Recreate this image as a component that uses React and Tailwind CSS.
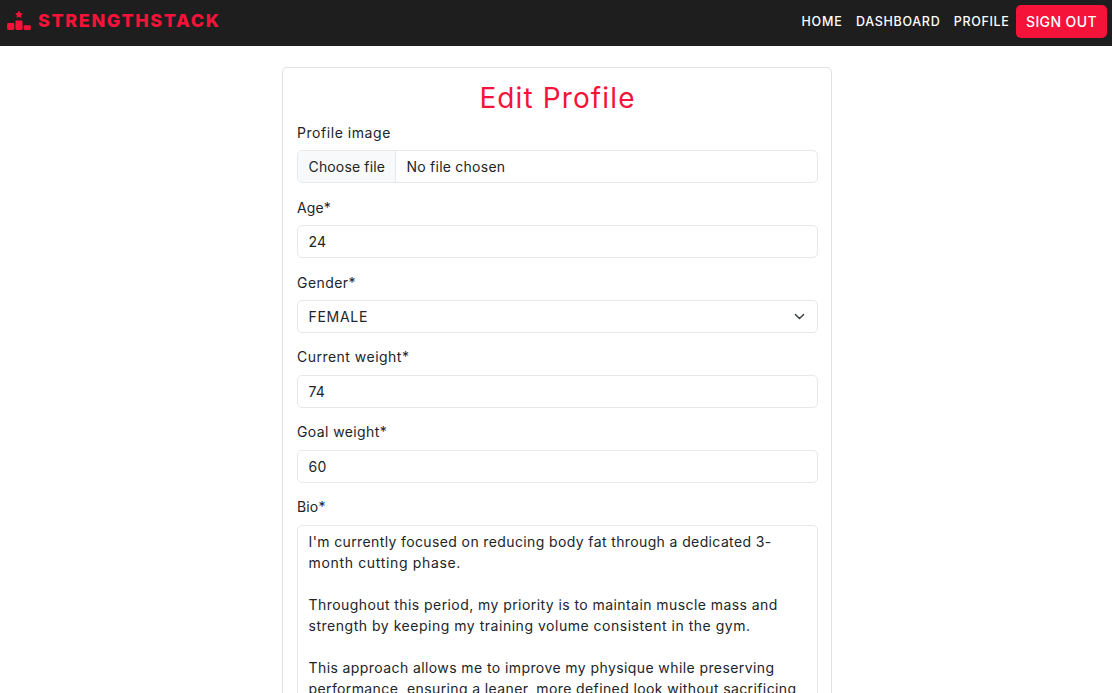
import React from "react";
import { FaRankingStar } from "react-icons/fa6";

const bio = [
  ["I'm currently focused on reducing body fat through a dedicated 3-", "tracking-[0.38px]"],
  ["month cutting phase.", "tracking-[0.66px]"],
  ["", ""],
  ["Throughout this period, my priority is to maintain muscle mass and", "tracking-[0.43px]"],
  ["strength by keeping my training volume consistent in the gym.", "tracking-[0.52px]"],
  ["", ""],
  ["This approach allows me to improve my physique while preserving", "tracking-[0.41px]"],
  ["performance, ensuring a leaner, more defined look without sacrificing", "tracking-[0.39px]"],
  ["strength.", "tracking-[0.45px]"],
];

function Field({ label, className, children }) {
  return (
    <div className="flex h-[75px] flex-col">
      <label className={`block h-[28px] leading-[21px] ${className}`}>{label}</label>
      {children}
    </div>
  );
}

const control =
  "block h-[33px] w-full rounded-[5px] border border-[#e6e8eb] bg-white px-[10.5px] leading-[21px] text-[#212529] outline-none";

function NavLink({ className, children }) {
  return (
    <a href="#" className={`pt-0.5 text-[12.5px] font-medium text-white ${className}`}>
      {children}
    </a>
  );
}

function Header() {
  return (
    <header className="flex h-[46px] items-start justify-between bg-[#1e1e1e] pr-[5.5px] pl-[7px]">
      <a href="#" className="flex h-[41px] items-center gap-[7px] text-[#f51339]">
        <FaRankingStar className="h-[19px] w-6" />
        <span className="text-[18px] font-extrabold tracking-[1.62px]">STRENGTHSTACK</span>
      </a>
      <nav className="flex items-center pt-[5px]">
        <NavLink className="mr-[13.5px] tracking-[0.8px]">HOME</NavLink>
        <NavLink className="mr-[13.5px] tracking-[0.7px]">DASHBOARD</NavLink>
        <NavLink className="mr-[6px] tracking-[0.65px]">PROFILE</NavLink>
        <button className="h-[33px] w-[91px] rounded-[5px] bg-[#f51339] pl-px text-[14px] font-medium tracking-[0.4px] whitespace-nowrap text-white">
          SIGN OUT
        </button>
      </nav>
    </header>
  );
}

export default function App() {
  return (
    <div className="h-[693px] overflow-hidden bg-white font-['Inter','Liberation_Sans',sans-serif] text-[14px] text-[#212529]">
      <Header />
      <main className="mt-[21px] ml-[282px] w-[550px] rounded-[5px] border border-[#dee0e2] pt-[13px] pr-[13px] pb-4 pl-[14px]">
        <h1 className="mb-[7px] h-[34px] text-center text-[28px] leading-[34px] tracking-[1.12px] text-[#f51339]">
          Edit Profile
        </h1>
        <form>
          <Field label="Profile image" className="tracking-[0.55px]">
            <div className="flex h-[33px] overflow-hidden rounded-[5px] border border-[#e6e8eb] leading-[31px]">
              <button type="button" className="w-[98px] border-r border-[#e6e8eb] bg-[#f8f9fa] pl-[10.5px] text-left tracking-[0.15px]">
                Choose file
              </button>
              <span className="pl-[10.5px] tracking-[0.24px]">No file chosen</span>
            </div>
          </Field>
          <Field label="Age*" className="tracking-[0.1px]">
            <input className={`${control} tracking-[0.2px]`} defaultValue="24" />
          </Field>
          <Field label="Gender*" className="tracking-[0.45px]">
            <div className="flex h-[33px] items-center justify-between rounded-[5px] border border-[#e6e8eb] pr-3 pl-[10.5px]">
              <span className="tracking-[0.7px]">FEMALE</span>
              <svg viewBox="0 0 16 16" className="h-[11px] w-[11px]" fill="none" stroke="#343a40" strokeWidth="2" strokeLinecap="round" strokeLinejoin="round">
                <path d="m2 5 6 6 6-6" />
              </svg>
            </div>
          </Field>
          <Field label="Current weight*" className="-mt-px mb-px tracking-[0.48px]">
            <input className={`${control} tracking-[0.2px]`} defaultValue="74" />
          </Field>
          <Field label="Goal weight*" className="-mt-px mb-px tracking-[0.4px]">
            <input className={`${control} tracking-[0.2px]`} defaultValue="60" />
          </Field>
          <label className="-mt-px mb-px block h-[28px] leading-[21px] tracking-[0.15px]">Bio*</label>
          <div className="h-[215px] rounded-[5px] border border-[#e6e8eb] px-[10.5px] py-[5px] leading-[21px] whitespace-pre">
            {bio.map(([line, tracking], i) => (
              <p key={i} className={`h-[21px] ${tracking}`}>
                {line}
              </p>
            ))}
          </div>
        </form>
      </main>
    </div>
  );
}
